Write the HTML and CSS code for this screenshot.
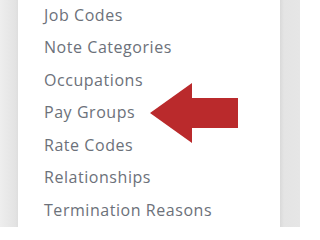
FILE: index.html
```html
<!DOCTYPE html>
<html>
<head>
<meta charset="utf-8">
<link rel="stylesheet" href="styles.css">
</head>
<body>
<div class="frame">
  <div class="side side-left"></div>
  <div class="panel">
    <ul class="menu">
      <li>Job Codes</li>
      <li>Note Categories</li>
      <li>Occupations</li>
      <li>Pay Groups</li>
      <li>Rate Codes</li>
      <li>Relationships</li>
      <li>Termination Reasons</li>
    </ul>
    <svg class="arrow" width="92" height="62" viewBox="148 82 92 62">
      <polygon points="150,113 192,83 192,98 238,98 238,128 192,128 192,143" fill="#ba2a2c"/>
    </svg>
  </div>
  <div class="side side-right"></div>
</div>
</body>
</html>
```

FILE: styles.css
```css
html, body {
  margin: 0;
  padding: 0;
  background: #fff;
}
.frame {
  display: flex;
  width: 300px;
  height: 227px;
  overflow: hidden;
}
.side-left {
  width: 18px;
  flex: none;
  background: linear-gradient(to right, #eeeeee, #e3e3e3 85%, #dedede);
}
.side-right {
  width: 20px;
  flex: none;
  background: linear-gradient(to right, #d9d9d9, #e4e4e4 20%, #e6e6e6);
}
.panel {
  flex: 1;
  position: relative;
  background: #fff;
}
.menu {
  list-style: none;
  margin: -1.5px 0 0 0;
  padding: 0 0 0 26px;
  font-family: "Open Sans", sans-serif;
  font-size: 16px;
  letter-spacing: 0.55px;
  line-height: 32.5px;
  color: #6c717a;
}
.arrow {
  position: absolute;
  left: 130px;
  top: 82px;
  width: 92px;
  height: 62px;
}
```
